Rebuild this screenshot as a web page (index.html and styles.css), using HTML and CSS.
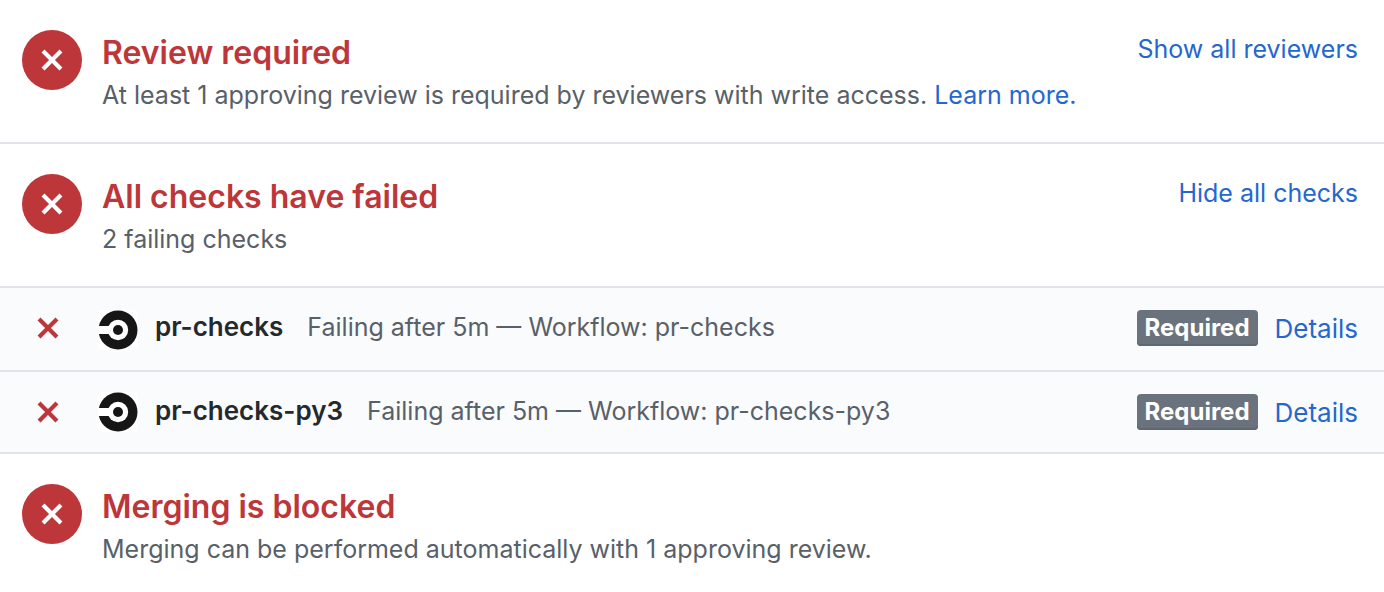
FILE: index.html
```html
<!DOCTYPE html>
<html lang="en">
<head>
<meta charset="utf-8">
<title>Merge status</title>
<link rel="stylesheet" href="styles.css">
</head>
<body>
<svg class="defs" aria-hidden="true">
  <symbol id="cross" viewBox="0 0 12 16"><path fill-rule="evenodd" d="M7.48 8l3.75 3.75-1.48 1.48L6 9.48l-3.75 3.75-1.48-1.48L4.52 8 .77 4.25l1.48-1.48L6 6.52l3.75-3.75 1.48 1.48L7.48 8z"/></symbol>
  <symbol id="circle" viewBox="0 0 40 40">
    <rect width="40" height="40" rx="4" fill="#fff"/>
    <circle cx="20" cy="20" r="19.5" fill="#161616"/>
    <circle cx="20" cy="20" r="10.200" fill="#fff"/>
    <path d="M0 16h12v8H0z" fill="#fff"/>
    <circle cx="20" cy="20" r="5" fill="#161616"/>
  </symbol>
</svg>
<main class="merge-box">
  <section class="item">
    <span class="badge"><svg class="badge-cross"><use href="#cross"/></svg></span>
    <div class="body">
      <h2 class="title">Review required</h2>
      <p class="text">At least 1 approving review is required by reviewers with write access. <a class="link" href="#">Learn more.</a></p>
    </div>
    <button class="link toggle" type="button">Show all reviewers</button>
  </section>
  <section class="item">
    <span class="badge"><svg class="badge-cross"><use href="#cross"/></svg></span>
    <div class="body">
      <h2 class="title">All checks have failed</h2>
      <p class="text">2 failing checks</p>
    </div>
    <button class="link toggle" type="button">Hide all checks</button>
  </section>
  <div class="check">
    <svg class="check-cross"><use href="#cross"/></svg>
    <svg class="avatar"><use href="#circle"/></svg>
    <strong class="name">pr-checks</strong>
    <span class="detail">Failing after 5m — Workflow: pr-checks</span>
    <span class="label">Required</span>
    <a class="link more" href="#">Details</a>
  </div>
  <div class="check">
    <svg class="check-cross"><use href="#cross"/></svg>
    <svg class="avatar"><use href="#circle"/></svg>
    <strong class="name">pr-checks-py3</strong>
    <span class="detail">Failing after 5m — Workflow: pr-checks-py3</span>
    <span class="label">Required</span>
    <a class="link more" href="#">Details</a>
  </div>
  <section class="item">
    <span class="badge"><svg class="badge-cross"><use href="#cross"/></svg></span>
    <div class="body">
      <h2 class="title">Merging is blocked</h2>
      <p class="text">Merging can be performed automatically with 1 approving review.</p>
    </div>
  </section>
</main>
</body>
</html>
```

FILE: styles.css
```css
* { box-sizing: border-box; }
body { margin: 0; background: #fff; color: #24292e; font-family: Inter, "Liberation Sans", sans-serif; font-size: 25px; line-height: 38px; }
.defs { position: absolute; width: 0; height: 0; }
.item { display: flex; align-items: flex-start; padding: 30px 26px 28px 22px; border-bottom: 2px solid #e1e4e8; }
.item:last-child { border-bottom: 0; }
.badge { display: flex; align-items: center; justify-content: center; flex: none; width: 60px; height: 60px; margin-right: 20px; border-radius: 50%; background: #bd3639; }
.badge-cross { width: 24px; height: 32px; fill: #fff; }
.body { flex: 1; }
.title { margin: 0; font-size: 32px; font-weight: 600; line-height: 46px; color: #bd3639; }
.text { margin: 0; color: #586069; }
.link { color: #2567cf; text-decoration: none; }
.toggle { padding: 0; border: 0; background: none; font: inherit; }
.check { display: flex; align-items: flex-start; padding: 20px 26px 20px 36px; border-bottom: 2px solid #e1e4e8; background: #fafbfc; }
.check + .check { padding-bottom: 18px; }
.check-cross { flex: none; width: 24px; height: 32px; margin: 4px 38px 0 0; fill: #bd3639; }
.avatar { flex: none; width: 40px; height: 40px; margin: 2px 17px 0 0; }
.check + .check .avatar { margin-top: 0; }
.name { margin-right: 24px; font-size: 26px; font-weight: 600; }
.detail { flex: 1; color: #586069; }
.label { margin: 2px 17px 0 0; padding: 0 8px; border-radius: 4px; background: #6a737d; box-shadow: inset 0 -2px 0 #5f676f; color: #fff; font-size: 24px; font-weight: 700; line-height: 36px; }
.more { font-size: 26px; line-height: 42px; }
```
